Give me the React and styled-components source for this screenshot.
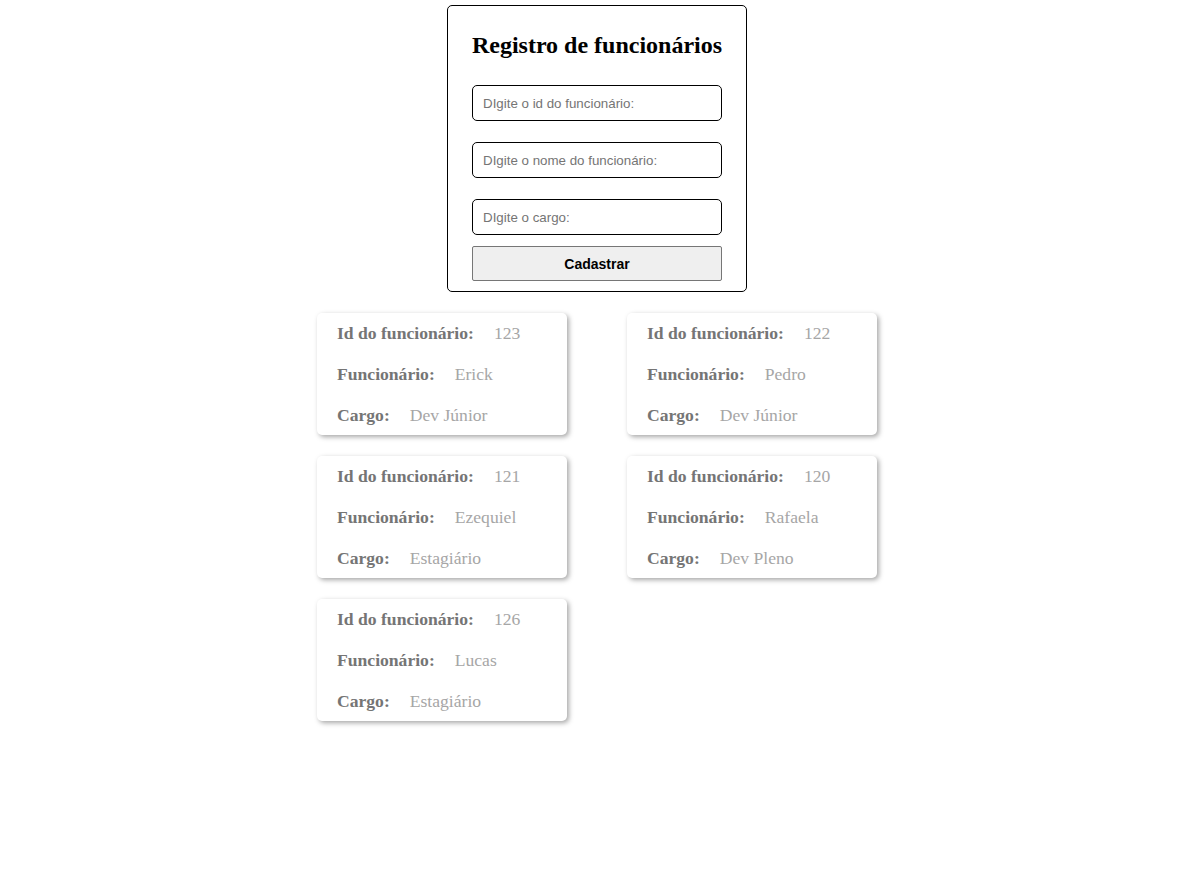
import React from "react";
import styled, { createGlobalStyle } from "styled-components";

const Global = createGlobalStyle`
  html, body { margin: 0; padding: 0; background: #fff; }
  body { font-family: "Liberation Serif", "Times New Roman", serif; }
  * { box-sizing: border-box; }
`;

const Page = styled.div`
  padding: 5px 10px 40px 0;
  display: flex;
  flex-direction: column;
  align-items: center;
  gap: 21px;
`;

const Form = styled.form`
  width: 300px;
  border: 1px solid #000;
  border-radius: 5px;
  padding: 25px 24px 10px;
  display: flex;
  flex-direction: column;
`;

const Title = styled.h2`
  margin: 0 -12px 26px;
  font-family: "Liberation Serif", "Times New Roman", serif;
  font-size: 24px;
  font-weight: bold;
  text-align: center;
  white-space: nowrap;
  color: #000;
  line-height: 28px;
`;

const Input = styled.input`
  width: 100%;
  height: 36px;
  border: 1px solid #000;
  border-radius: 5px;
  padding: 0 10px;
  margin-bottom: ${(p) => p.$mb}px;
  font-family: "Liberation Sans", Arial, sans-serif;
  font-size: 13.33px;
  color: #000;
  background: #fff;
  outline: none;
  &::placeholder { color: #757575; }
`;

const Button = styled.button`
  width: 100%;
  height: 35px;
  border: 1px solid #767676;
  border-radius: 2px;
  background: #efefef;
  font-family: "Liberation Sans", Arial, sans-serif;
  font-size: 14px;
  font-weight: bold;
  color: #000;
`;

const Grid = styled.div`
  display: grid;
  grid-template-columns: 250px 250px;
  column-gap: 60px;
  row-gap: 21px;
`;

const Card = styled.div`
  height: 122px;
  border-radius: 5px;
  background: #fff;
  box-shadow: 2px 2px 5px rgba(0, 0, 0, 0.35);
  padding: 10px 20px 0;
  display: flex;
  flex-direction: column;
  gap: 21px;
`;

const Row = styled.div`
  display: flex;
  gap: 20px;
  font-size: 17.6px;
  line-height: 20px;
  white-space: nowrap;
`;

const Label = styled.span`
  font-weight: bold;
  color: #757575;
`;

const Value = styled.span`
  color: #a6a6a6;
`;

const employees = [
  { id: 123, nome: "Erick", cargo: "Dev Júnior" },
  { id: 122, nome: "Pedro", cargo: "Dev Júnior" },
  { id: 121, nome: "Ezequiel", cargo: "Estagiário" },
  { id: 120, nome: "Rafaela", cargo: "Dev Pleno" },
  { id: 126, nome: "Lucas", cargo: "Estagiário" },
];

export default function App() {
  return (
    <>
      <Global />
      <Page>
        <Form onSubmit={(e) => e.preventDefault()}>
          <Title>Registro de funcionários</Title>
          <Input $mb={21} placeholder="DIgite o id do funcionário:" />
          <Input $mb={21} placeholder="DIgite o nome do funcionário:" />
          <Input $mb={11} placeholder="DIgite o cargo:" />
          <Button type="submit">Cadastrar</Button>
        </Form>
        <Grid>
          {employees.map((e) => (
            <Card key={e.id}>
              <Row>
                <Label>Id do funcionário:</Label>
                <Value>{e.id}</Value>
              </Row>
              <Row>
                <Label>Funcionário:</Label>
                <Value>{e.nome}</Value>
              </Row>
              <Row>
                <Label>Cargo:</Label>
                <Value>{e.cargo}</Value>
              </Row>
            </Card>
          ))}
        </Grid>
      </Page>
    </>
  );
}
